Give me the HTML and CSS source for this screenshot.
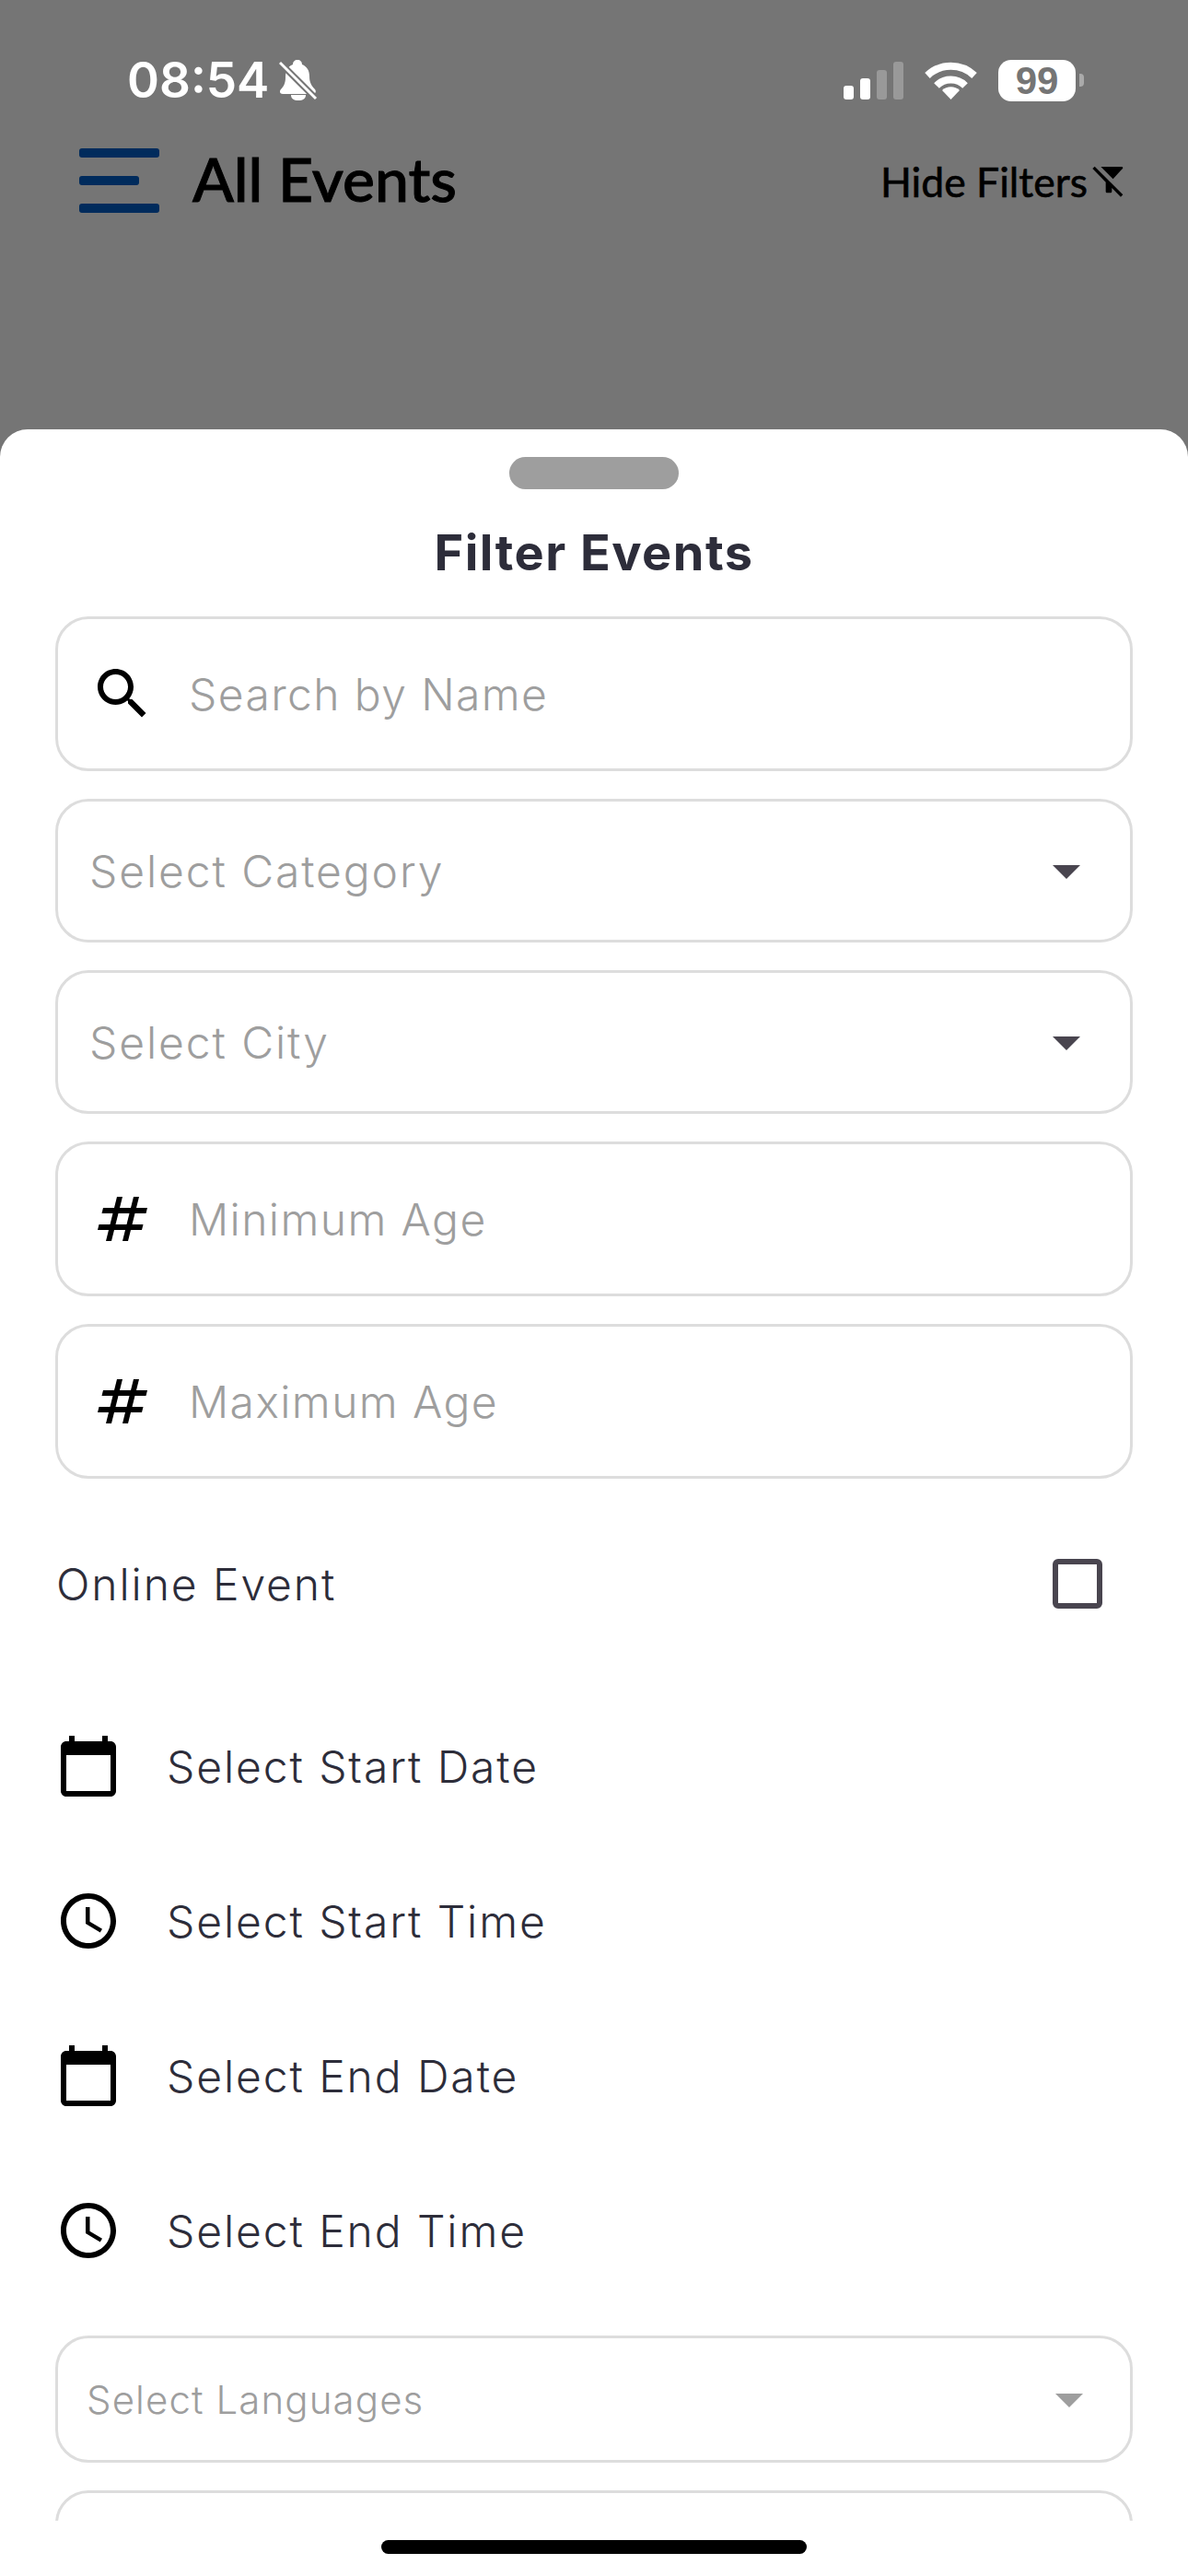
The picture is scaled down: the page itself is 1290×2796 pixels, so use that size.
FILE: index.html
```html
<!DOCTYPE html>
<html lang="en">
<head>
    <meta charset="UTF-8">
    <meta name="viewport" content="width=device-width, initial-scale=1.0">
    <title>All Events</title>
    <link rel="stylesheet" href="styles.css">
</head>

<body>
    <div class="screen">
        <!-- Status bar -->
        <div class="status-bar">
            <div class="status-left">
                <span class="clock">08:54</span>
                <svg class="bell-icon" viewBox="0 0 42 44">
                    <path fill="#fff" d="M20 0c-3 0-5 2-5 5-6 2-8 8-8 14 0 6-2 10-5 13-2 2-1 5 2 5h32c3 0 5-2 3-5-4-4-6-8-6-14 0-7-3-11-8-13 0-3-2-5-5-5zM13 38h16c0 4-3 6-8 6s-8-2-8-6z"/>
                    <path stroke="#757575" stroke-width="7" d="M-1 1 44 46"/>
                    <path stroke="#fff" stroke-width="3" d="M1 3 40 42"/>
                </svg>
            </div>
            <div class="status-right">
                <div class="signal">
                    <span class="bar bar-1"></span>
                    <span class="bar bar-2"></span>
                    <span class="bar bar-3 bar-off"></span>
                    <span class="bar bar-4 bar-off"></span>
                </div>
                <svg class="wifi-icon" viewBox="0 0 57 42">
                    <path fill="none" stroke="#fff" stroke-width="8" d="M3 16A37 37 0 0 1 54 16"/>
                    <path fill="none" stroke="#fff" stroke-width="8" d="M13 27A22 22 0 0 1 44 27"/>
                    <path fill="#fff" d="M28.5 42 19 32A14 14 0 0 1 38 32Z"/>
                </svg>
                <div class="battery">
                    <span class="battery-level">99</span>
                    <span class="battery-tip"></span>
                </div>
            </div>
        </div>

        <!-- App bar, dimmed behind the sheet -->
        <div class="app-bar">
            <div class="menu-icon">
                <span class="menu-line"></span>
                <span class="menu-line menu-line-short"></span>
                <span class="menu-line"></span>
            </div>
            <h1 class="page-title">All Events</h1>
            <div class="hide-filters">
                <span>Hide Filters</span>
                <svg class="filter-off-icon" viewBox="0 0 24 24">
                    <path d="M21 4.25c.4-.46.07-1.25-.55-1.25H6.83l7.92 7.92L19.8 5.4zM2.81 2.81 1.39 4.22 10 13v6c0 .55.45 1 1 1h2c.55 0 1-.45 1-1v-2.17l5.78 5.78 1.41-1.41z"/>
                </svg>
            </div>
        </div>

        <!-- Bottom sheet -->
        <div class="sheet">
            <div class="sheet-handle"></div>
            <h2 class="sheet-title">Filter Events</h2>

            <div class="filter-form">
                <div class="field">
                    <svg class="icon" viewBox="0 0 24 24"><path d="M15.5 14h-.79l-.28-.27C15.41 12.59 16 11.11 16 9.5 16 5.91 13.09 3 9.5 3S3 5.91 3 9.5 5.91 16 9.5 16c1.61 0 3.09-.59 4.23-1.57l.27.28v.79l5 4.99L20.49 19l-4.99-5zm-6 0C7.01 14 5 11.99 5 9.5S7.01 5 9.5 5 14 7.01 14 9.5 11.99 14 9.5 14z"/></svg>
                    <span class="placeholder">Search by Name</span>
                </div>

                <div class="select">
                    <span class="placeholder">Select Category</span>
                    <svg class="icon arrow" viewBox="0 0 24 24"><path d="M7 10l5 5 5-5z"/></svg>
                </div>
                <div class="select">
                    <span class="placeholder">Select City</span>
                    <svg class="icon arrow" viewBox="0 0 24 24"><path d="M7 10l5 5 5-5z"/></svg>
                </div>

                <div class="field">
                    <svg class="icon" viewBox="0 0 24 24"><path d="M20.5 10l.5-2h-4l1-4h-2l-1 4h-4l1-4h-2L9 8H5l-.5 2h4l-1 4h-4L3 16h4l-1 4h2l1-4h4l-1 4h2l1-4h4l.5-2h-4l1-4h4zm-7 4h-4l1-4h4l-1 4z"/></svg>
                    <span class="placeholder">Minimum Age</span>
                </div>
                <div class="field">
                    <svg class="icon" viewBox="0 0 24 24"><path d="M20.5 10l.5-2h-4l1-4h-2l-1 4h-4l1-4h-2L9 8H5l-.5 2h4l-1 4h-4L3 16h4l-1 4h2l1-4h4l-1 4h2l1-4h4l.5-2h-4l1-4h4zm-7 4h-4l1-4h4l-1 4z"/></svg>
                    <span class="placeholder">Maximum Age</span>
                </div>

                <div class="online-row">
                    <span class="row-label">Online Event</span>
                    <span class="checkbox"></span>
                </div>

                <div class="picker-list">
                    <div class="picker-row">
                        <svg class="icon" viewBox="0 0 24 24"><path d="M20 3h-1V1h-2v2H7V1H5v2H4c-1.1 0-2 .9-2 2v16c0 1.1.9 2 2 2h16c1.1 0 2-.9 2-2V5c0-1.1-.9-2-2-2zm0 18H4V8h16v13z"/></svg>
                        <span class="row-label">Select Start Date</span>
                    </div>
                    <div class="picker-row">
                        <svg class="icon" viewBox="0 0 24 24"><path d="M11.99 2C6.47 2 2 6.48 2 12s4.47 10 9.99 10C17.52 22 22 17.52 22 12S17.52 2 11.99 2zM12 20c-4.42 0-8-3.58-8-8s3.58-8 8-8 8 3.58 8 8-3.58 8-8 8zm.5-13H11v6l5.25 3.15.75-1.23-4.5-2.67z"/></svg>
                        <span class="row-label">Select Start Time</span>
                    </div>
                    <div class="picker-row">
                        <svg class="icon" viewBox="0 0 24 24"><path d="M20 3h-1V1h-2v2H7V1H5v2H4c-1.1 0-2 .9-2 2v16c0 1.1.9 2 2 2h16c1.1 0 2-.9 2-2V5c0-1.1-.9-2-2-2zm0 18H4V8h16v13z"/></svg>
                        <span class="row-label">Select End Date</span>
                    </div>
                    <div class="picker-row">
                        <svg class="icon" viewBox="0 0 24 24"><path d="M11.99 2C6.47 2 2 6.48 2 12s4.47 10 9.99 10C17.52 22 22 17.52 22 12S17.52 2 11.99 2zM12 20c-4.42 0-8-3.58-8-8s3.58-8 8-8 8 3.58 8 8-3.58 8-8 8zm.5-13H11v6l5.25 3.15.75-1.23-4.5-2.67z"/></svg>
                        <span class="row-label">Select End Time</span>
                    </div>
                </div>

                <div class="multi-select">
                    <span class="placeholder-small">Select Languages</span>
                    <svg class="icon arrow-light" viewBox="0 0 24 24"><path d="M7 10l5 5 5-5z"/></svg>
                </div>
                <div class="multi-select"></div>
            </div>

            <div class="home-area">
                <div class="home-indicator"></div>
            </div>
        </div>
    </div>
</body>
</html>
```

FILE: styles.css
```css
* {
    box-sizing: border-box;
}
body {
    margin: 0;
    padding: 0;
    font-family: Inter, "Liberation Sans", sans-serif;
}
.screen {
    width: 1290px;
    height: 2796px;
    background-color: #757575;
    display: flex;
    flex-direction: column;
    overflow: hidden;
}
.status-bar {
    height: 46px;
    margin-top: 64px;
    padding: 0 113px 0 138px;
    display: flex;
    justify-content: space-between;
    align-items: center;
}
.status-left {
    display: flex;
    align-items: center;
    gap: 11px;
}
.clock {
    color: #fff;
    font-size: 53px;
    font-weight: 600;
    line-height: 46px;
    font-family: Inter, sans-serif;
}
.bell-icon {
    width: 42px;
    height: 44px;
}
.status-right {
    display: flex;
    align-items: center;
    gap: 23px;
}
.signal {
    display: flex;
    align-items: flex-end;
    gap: 7px;
    height: 41px;
}
.bar {
    width: 11px;
    background-color: #fff;
    border-radius: 3px;
}
.bar-1 { height: 15px; }
.bar-2 { height: 23px; }
.bar-3 { height: 32px; }
.bar-4 { height: 41px; }
.bar-off {
    background-color: #999;
}
.wifi-icon {
    width: 57px;
    height: 42px;
}
.battery {
    display: flex;
    align-items: center;
    gap: 4px;
}
.battery-level {
    width: 84px;
    height: 45px;
    background-color: #fff;
    border-radius: 14px;
    color: #757575;
    font-family: "Liberation Sans", sans-serif;
    font-size: 42px;
    font-weight: bold;
    line-height: 45px;
    text-align: center;
}
.battery-tip {
    width: 5px;
    height: 14px;
    background-color: #aaa;
    border-radius: 0 4px 4px 0;
}
.app-bar {
    height: 70px;
    margin-top: 51px;
    padding: 0 66px 0 86px;
    display: flex;
    align-items: center;
}
.menu-icon {
    width: 87px;
    display: flex;
    flex-direction: column;
    gap: 20px;
}
.menu-line {
    display: block;
    height: 10px;
    background-color: #002b5c;
    border-radius: 3px;
}
.menu-line-short {
    width: 65px;
}
.page-title {
    margin: 0 0 6px 36px;
    flex: 1;
    color: #000;
    font-family: Lato, sans-serif;
    font-size: 66px;
    font-weight: 500;
    -webkit-text-stroke: 1px #000;
}
.hide-filters {
    display: flex;
    align-items: center;
    gap: 3px;
    color: #000;
    font-family: Lato, sans-serif;
    font-size: 44.5px;
    -webkit-text-stroke: 0.6px #000;
}
.filter-off-icon {
    width: 40px;
    height: 40px;
}
.sheet {
    flex: 1;
    min-height: 0;
    margin-top: 235px;
    background-color: #fff;
    border-radius: 30px 30px 0 0;
    display: flex;
    flex-direction: column;
    align-items: center;
}
.sheet-handle {
    width: 184px;
    height: 35px;
    margin-top: 30px;
    background-color: #9e9e9e;
    border-radius: 18px;
    flex-shrink: 0;
}
.sheet-title {
    margin: 36px 0 36px;
    color: #2d2d3a;
    font-size: 54px;
    font-weight: 700;
    line-height: 66px;
    letter-spacing: 1.5px;
}
.filter-form {
    flex: 1;
    min-height: 0;
    width: 100%;
    padding: 0 60px;
    overflow: hidden;
    display: flex;
    flex-direction: column;
    gap: 30px;
}
.field, .select, .multi-select {
    flex-shrink: 0;
    border: 3px solid #ddd;
    border-radius: 36px;
    display: flex;
    align-items: center;
}
.field {
    height: 168px;
    padding-left: 34px;
}
.select {
    height: 156px;
    padding: 0 33px 0 34px;
    justify-content: space-between;
}
.multi-select {
    height: 138px;
    padding: 0 30px 0 31px;
    justify-content: space-between;
}
.icon {
    width: 72px;
    height: 72px;
    flex-shrink: 0;
}
.arrow {
    fill: #49454f;
}
.arrow-light {
    fill: #9e9e9e;
}
.placeholder {
    color: #9e9e9e;
    font-size: 48px;
    font-weight: 300;
    letter-spacing: 1.9px;
}
.field .placeholder {
    margin-left: 36px;
    letter-spacing: 1.4px;
}
.placeholder-small {
    color: #9e9e9e;
    font-size: 42px;
    font-weight: 300;
    letter-spacing: 1.1px;
}
.online-row {
    flex-shrink: 0;
    height: 144px;
    margin-top: 12px;
    padding: 0 33px 0 1px;
    display: flex;
    justify-content: space-between;
    align-items: center;
}
.row-label {
    color: #2d2d3a;
    font-size: 48px;
    font-weight: 350;
    letter-spacing: 1.9px;
}
.checkbox {
    width: 54px;
    height: 54px;
    border: 6px solid #49454f;
    border-radius: 6px;
}
.picker-list {
    flex-shrink: 0;
    margin-top: 12px;
}
.picker-row {
    height: 168px;
    display: flex;
    align-items: center;
    gap: 49px;
}
.home-area {
    width: 100%;
    height: 60px;
    flex-shrink: 0;
    padding-top: 21px;
    display: flex;
    justify-content: center;
    align-items: flex-start;
}
.home-indicator {
    width: 462px;
    height: 15px;
    background-color: #000;
    border-radius: 8px;
}
```
